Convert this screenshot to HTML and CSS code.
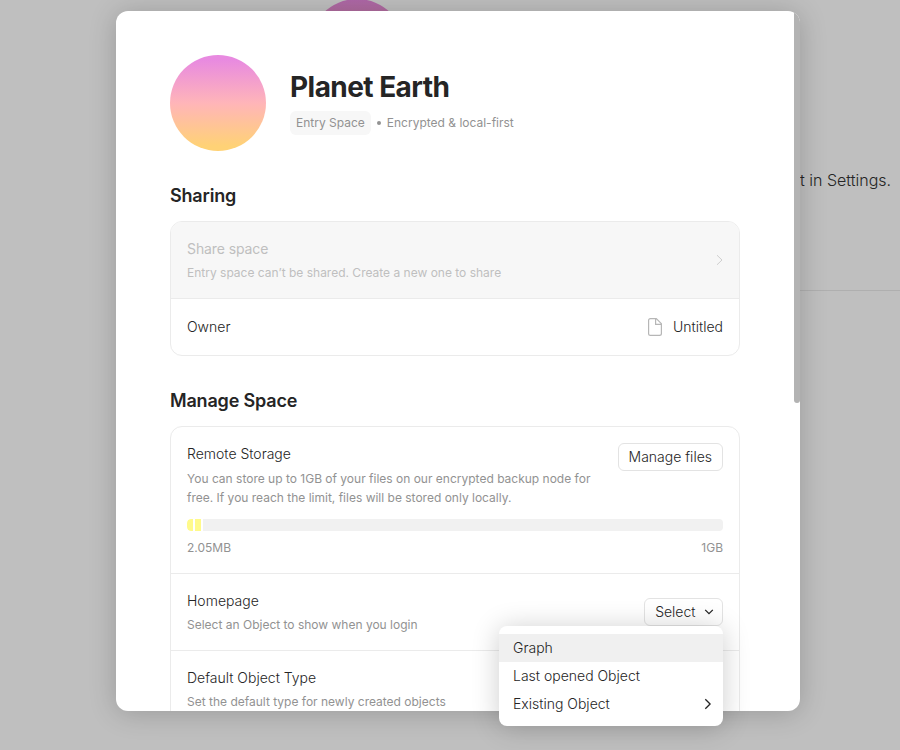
FILE: index.html
```html
<!DOCTYPE html>
<html lang="en">
<head>
<meta charset="utf-8">
<title>Space settings</title>
<link rel="stylesheet" href="styles.css">
</head>
<body>
<div class="page">
  <div class="page-icon"></div>
  <p class="page-text">t in Settings.</p>
  <hr class="page-line">
</div>
<main class="modal">
  <div class="scrollbar"></div>
  <header class="head">
    <div class="avatar"></div>
    <div class="head-info">
      <h1 class="title">Planet Earth</h1>
      <div class="meta"><span class="tag">Entry Space</span><i class="bullet"></i><span class="meta-text">Encrypted &amp; local-first</span></div>
    </div>
  </header>

  <h2 class="section-title">Sharing</h2>
  <section class="card">
    <div class="row disabled">
      <div class="side"><div class="name">Share space</div><div class="descr">Entry space can’t be shared. Create a new one to share</div></div>
      <svg class="chevron" width="7" height="12" viewBox="0 0 7 12"><path d="M1 1.2 L6 6 L1 10.8"/></svg>
    </div>
    <div class="row owner">
      <div class="name">Owner</div>
      <div class="object">
        <svg class="file" width="14" height="18" viewBox="0 0 14 18"><path d="M2.5 .6H8.3L13.4 5.7V15.5Q13.4 17.4 11.5 17.4H2.5Q.6 17.4 .6 15.5V2.5Q.6 .6 2.5 .6ZM7.6 .6V6.4H13.4"/></svg>
        <span>Untitled</span>
      </div>
    </div>
  </section>

  <h2 class="section-title">Manage Space</h2>
  <section class="card">
    <div class="row storage">
      <div class="storage-top">
        <div class="side"><div class="name">Remote Storage</div><div class="descr long">You can store up to 1GB of your files on our encrypted backup node for free. If you reach the limit, files will be stored only locally.</div></div>
        <button class="button">Manage files</button>
      </div>
      <div class="bar"><i class="used first"></i><i class="used"></i><i class="rest"></i></div>
      <div class="labels"><span>2.05MB</span><span>1GB</span></div>
    </div>
    <div class="row">
      <div class="side"><div class="name">Homepage</div><div class="descr">Select an Object to show when you login</div></div>
      <button class="button select">Select
        <svg width="10" height="6" viewBox="0 0 10 6"><path d="M1.2 .9 L5 4.7 L8.8 .9"/></svg>
      </button>
    </div>
    <div class="row">
      <div class="side"><div class="name">Default Object Type</div><div class="descr">Set the default type for newly created objects</div></div>
    </div>
  </section>
</main>
<nav class="menu">
  <div class="item active">Graph</div>
  <div class="item">Last opened Object</div>
  <div class="item">Existing Object
    <svg width="8" height="12" viewBox="0 0 8 12"><path d="M1.3 1.2 L6.1 6 L1.3 10.8"/></svg>
  </div>
</nav>
</body>
</html>
```
FILE: styles.css
```css
* { box-sizing: border-box; }
body {
  margin: 0;
  width: 900px;
  height: 750px;
  overflow: hidden;
  position: relative;
  background: #bfbfbf;
  color: #252525;
  font: 350 14px/22px Inter, sans-serif;
}
h1, h2, p { margin: 0; }
svg { display: block; fill: none; stroke: currentColor; flex: none; }

.page-icon {
  position: absolute;
  left: 309px;
  top: -1px;
  width: 96px;
  height: 96px;
  border-radius: 50%;
  background: linear-gradient(#ae67a8, #bf8f60);
}
.page-text {
  position: absolute;
  left: 800px;
  top: 168px;
  font-size: 16px;
  line-height: 24px;
  white-space: nowrap;
}
.page-line {
  position: absolute;
  left: 700px;
  right: 0;
  top: 290px;
  margin: 0;
  border: 0;
  height: 1px;
  background: #afafaf;
}

.modal {
  position: absolute;
  left: 116px;
  top: 11px;
  width: 684px;
  height: 700px;
  padding: 44px 60px 0 54px;
  border-radius: 12px;
  background: #fff;
  overflow: hidden;
  box-shadow: 0 2px 28px rgba(0, 0, 0, .2);
}
.scrollbar {
  position: absolute;
  right: 0;
  top: 0;
  width: 6px;
  height: 392px;
  border-radius: 3px;
  background: #b3b3b3;
}

.head { display: flex; gap: 24px; height: 96px; }
.avatar {
  width: 96px;
  height: 96px;
  border-radius: 50%;
  background: linear-gradient(#e88ae0 5%, #ffb5b9 50%, #ffd276 95%);
}
.head-info { padding-top: 16px; }
.title { font-size: 28px; line-height: 32px; font-weight: 670; letter-spacing: -.55px; }
.meta { display: flex; align-items: center; margin-top: 8px; font-size: 12px; font-weight: 400; line-height: 24px; color: #929292; }
.tag { padding: 0 6px; border-radius: 6px; background: #f7f7f7; }
.bullet { width: 4px; height: 4px; margin: 0 6px; border-radius: 50%; background: #929292; }

.section-title { margin: 32px 0 12px; font-size: 18px; line-height: 26px; font-weight: 600; letter-spacing: -.18px; }
.card { border: 1px solid #ebebeb; border-radius: 12px; overflow: hidden; }
.row { display: flex; align-items: center; justify-content: space-between; padding: 16px; }
.row + .row { border-top: 1px solid #ebebeb; }
.descr { margin-top: 4px; font-size: 12px; font-weight: 400; line-height: 18px; color: #929292; }
.descr.long { width: 410px; line-height: 19px; }
.disabled { background: #f7f7f7; color: #bfbfbf; font-weight: 400; }
.disabled .name { letter-spacing: -.1px; }
.disabled .descr { color: #bfbfbf; }
.chevron { color: #cfcfcf; }
.owner { height: 57px; }
.object { display: flex; align-items: center; gap: 10.6px; }
.file { color: #b6b6b6; stroke-width: 1.2; }

.storage { display: block; height: 146px; }
.storage-top { display: flex; justify-content: space-between; align-items: flex-start; }
.button {
  display: flex;
  align-items: center;
  height: 28px;
  padding: 0 10px;
  border: 1px solid #e3e3e3;
  border-radius: 6px;
  background: #fff;
  color: #252525;
  font: inherit;
}
.select { gap: 8.5px; padding: 0 8px 0 10.5px; }
.bar { display: flex; gap: 2px; height: 12px; margin-top: 12px; border-radius: 4px; overflow: hidden; }
.used { width: 6px; background: #fffa8b; }
.used.first { border-radius: 4px 0 0 4px; }
.rest { flex: 1; background: #f1f1f1; }
.labels { display: flex; justify-content: space-between; margin-top: 8px; font-size: 12px; font-weight: 400; line-height: 18px; color: #929292; }

.menu {
  position: absolute;
  left: 499px;
  top: 626px;
  width: 224px;
  padding: 8px 0;
  border-radius: 8px;
  background: #fff;
  box-shadow: 0 2px 28px rgba(0, 0, 0, .2);
}
.item { display: flex; align-items: center; justify-content: space-between; height: 28px; padding: 0 11px 0 14px; }
.item svg, .select svg { stroke-width: 1.3; }
.item.active { background: #f0f0f0; }
```
